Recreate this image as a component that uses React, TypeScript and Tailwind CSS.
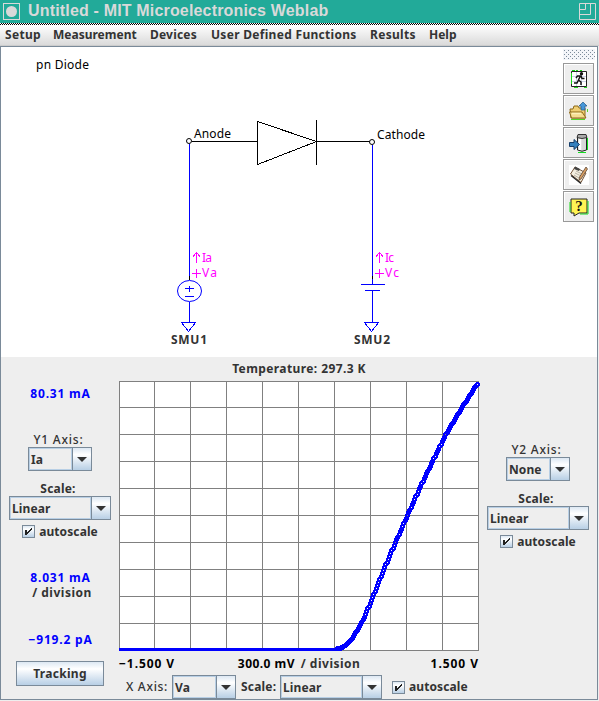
import React from "react";

const GRID_X = [0, 35, 71, 107, 143, 179, 215, 251, 287, 323, 359];
const GRID_Y = [0, 26, 53, 80, 107, 134, 161, 188, 215, 242, 269];

// Measured curve in plot coordinates, interpolated for each sweep step.
const CURVE: [number, number][] = [
  [0, 268], [215, 268], [221, 267], [226, 264], [230, 260], [234, 255], [242, 242],
  [252, 219], [264, 189], [276, 161], [288, 134], [301, 105], [313, 80],
  [326, 54], [344, 24], [351, 13], [358, 2],
];

function curveY(x: number) {
  for (let i = 1; i < CURVE.length; i++) {
    const [x0, y0] = CURVE[i - 1];
    const [x1, y1] = CURVE[i];
    if (x <= x1) return y0 + ((y1 - y0) * (x - x0)) / (x1 - x0);
  }
  return 2;
}

// The flat part of the sweep is drawn as a solid line; markers start at the knee.
const POINTS = Array.from({ length: 299 }, (_, i) => {
  const x = i * 1.2;
  return [Math.round(x) + 0.5, Math.round(curveY(x)) + 0.5];
}).filter(([x]) => x > 218);

function Combo({ value, wide }: { value: string; wide?: boolean }) {
  return (
    <div className={`flex h-6 border border-[#7a8a99] ${wide ? "w-[102px]" : "w-16"}`}>
      <div className="flex-1 border border-[#b8cfe5] pl-px leading-[21px] tracking-[0.1px] text-[#333]">
        {value}
      </div>
      <div className="flex w-[19px] items-center justify-center border-l border-[#7a8a99] bg-linear-to-b from-[#dde8f3] via-white via-30% to-[#b8cfe5]">
        <svg width="10" height="5" viewBox="0 0 10 5">
          <path d="M0 0H10L5 5Z" fill="#333" />
        </svg>
      </div>
    </div>
  );
}

function Check() {
  return (
    <div className="flex h-[13px] items-center gap-[4px]">
      <div className="size-[13px] border border-[#7a8a99] bg-linear-to-b from-[#dde8f3] via-white via-30% to-[#b8cfe5]">
        <svg width="11" height="11" viewBox="0 0 11 11" shapeRendering="crispEdges">
          <path d="M2 4H4V6H5V5H6V4H7V3H8V2H9V4H8V5H7V6H6V7H5V8H4V9H2Z" fill="#222" />
        </svg>
      </div>
      <span className="leading-4 tracking-[0.1px]">autoscale</span>
    </div>
  );
}

function ToolButton({ children }: { children: React.ReactNode }) {
  return (
    <div className="flex size-[31px] items-center justify-center border border-[#999] bg-[#eee] shadow-[inset_1px_1px_0_#fff]">
      <svg width="20" height="20" viewBox="0 0 20 20">
        {children}
      </svg>
    </div>
  );
}

function Toolbar() {
  return (
    <div className="flex w-[34px] flex-col gap-px pt-[2px]">
      <svg className="mb-[2px] shrink-0" width="32" height="11" shapeRendering="crispEdges">
        <defs>
          <pattern id="grip" width="4" height="4" patternUnits="userSpaceOnUse">
            <rect width="4" height="4" fill="#f3f5f9" />
            <path d="M1 1h1v1h-1zM3 3h1v1h-1z" fill="#7a8a99" />
          </pattern>
        </defs>
        <rect width="32" height="11" fill="url(#grip)" />
      </svg>
      <ToolButton>
        <path d="M2.500 2.500H17.500V17.500H2.500Z" fill="#fff" stroke="#222" />
        <path d="M7.500 3V17M12.500 3V17M3 7.500H17M3 12.500H17" stroke="#ccd3e8" />
        <path d="M2.500 4V15M3 1.500h3M7 1.500h2M11 1.500h2M5 18.500h4M15 18.500h3" stroke="#19d819" />
        <circle cx="12.500" cy="4.800" r="1.700" fill="#111" />
        <path d="M11.500 6.500L9.500 11L12 13V16M9.500 11L8 14H5M7 9L8.500 7H12L13 9.500H15.500" fill="none" stroke="#111" strokeWidth="1.500" />
      </ToolButton>
      <ToolButton>
        <path d="M2 17L1 8H4L5 5H9L10 7H16V17Z" fill="#efce73" stroke="#8c6818" />
        <path d="M2.500 17L.5 11H13L17 17Z" fill="#f5dc91" stroke="#8c6818" />
        <path d="M3 12.500H12" stroke="#fff1b8" strokeWidth="1.500" />
        <path d="M14 1L18 5H16V9H12V5H10Z" fill="#4797d8" stroke="#235785" strokeWidth=".7" />
        <path d="M2 18.500H16M18.500 8V11" stroke="#51d928" />
      </ToolButton>
      <ToolButton>
        <path d="M8.500 3V17Q13 19.500 17.500 17V3Z" fill="#d7d8d8" stroke="#222" />
        <path d="M11 6V17" stroke="#fff" strokeWidth="2.500" />
        <path d="M9 1.500H17L18 4.500Q13 6.500 8 4.500Z" fill="#aaa" stroke="#333" />
        <path d="M18.500 5V17M9 19.500H17" stroke="#12dd20" />
        <path d="M.5 9.500H5V6.500L10.500 11.500L5 16.500V13.500H.5Z" fill="#3580bd" stroke="#173e6a" />
      </ToolButton>
      <ToolButton>
        <rect width="20" height="20" fill="#fff" />
        <path d="M6 2L17 8L12 17.500L1.500 9Z" fill="#f4eee0" stroke="#75553a" />
        <path d="M7 6L13 9M6 8L12 11M5 10L10 13" stroke="#aaa294" strokeWidth=".8" />
        <path d="M6 1.500L11 4L10 6L5 4Z" fill="#444" />
        <path d="M17 2L10.500 12L10 15L12 14L18.500 4Z" fill="#d9a064" stroke="#4b3728" strokeWidth=".7" />
        <path d="M2 10.500L12 18.500" stroke="#222" strokeWidth="1.200" />
      </ToolButton>
      <ToolButton>
        <path d="M2 2H18V16H10L5 19V16H2Z" fill="#fff454" stroke="#222" />
        <path d="M19 4V17H11M1 5V15" fill="none" stroke="#19d819" />
        <text x="10" y="14" fill="#111" textAnchor="middle" className="font-['Liberation_Serif',serif] text-[15px] font-bold">?</text>
      </ToolButton>
    </div>
  );
}

function Schematic() {
  return (
    <svg className="block shrink-0" width="562" height="310" viewBox="1 47 562 310" fill="none">
      <g stroke="#000" shapeRendering="crispEdges">
        <path d="M192 141.500H257M317 141.500H370M257.500 121V165M316.500 120V165" />
        <path d="M257.500 121.500L316.500 141.500L257.500 164.500" />
      </g>
      <g stroke="#00f" shapeRendering="crispEdges">
        <path d="M189.500 144V280M372.500 145V284M189.500 302V322M372.500 290V322" />
        <path d="M361 284.500H385M365 290.500H380" />
        <path d="M185 288.500H194M189.500 286V292M185 296.500H194" />
        <path d="M181.500 322.500H195.500L188.500 331.500ZM364.500 322.500H378.500L371.500 331.500Z" />
      </g>
      <ellipse cx="189.500" cy="291" rx="12" ry="10.500" stroke="#00f" />
      <path d="M189.500 276V280M372.500 276V279" stroke="#000" />
      <circle cx="189" cy="141" r="2.500" stroke="#000" fill="#fff" />
      <circle cx="372" cy="142" r="2.500" stroke="#000" fill="#fff" />
      <g stroke="#f0f" shapeRendering="crispEdges">
        <path d="M196.500 253V263M193 256.500L196.500 252.500L200 256.500M192 273.500H201M196.500 269V278" />
        <path d="M379.500 253V263M376 256.500L379.500 252.500L383 256.500M375 273.500H384M379.500 269V278" />
      </g>
      <g className="font-['Noto_Sans',sans-serif] text-[12px] font-normal" fill="#000">
        <text x="36" y="69" textLength="53">pn Diode</text>
        <text x="194" y="138" textLength="37">Anode</text>
        <text x="377" y="139" textLength="48">Cathode</text>
        <g fill="#f0f">
          <text x="202" y="262" textLength="10">Ia</text>
          <text x="202" y="277" textLength="15">Va</text>
          <text x="385" y="262" textLength="9">Ic</text>
          <text x="385" y="277" textLength="14">Vc</text>
        </g>
        <g fill="#333" className="font-bold">
          <text x="171" y="344" textLength="36">SMU1</text>
          <text x="354" y="344" textLength="36">SMU2</text>
        </g>
      </g>
    </svg>
  );
}

function Plot() {
  return (
    <svg className="block overflow-visible" width="360" height="270" shapeRendering="crispEdges">
      <rect width="360" height="270" fill="#fff" />
      {GRID_X.map((x) => <path key={x} d={`M${x + 0.5} 0V270`} stroke="#808080" />)}
      {GRID_Y.map((y) => <path key={y} d={`M0 ${y + 0.5}H360`} stroke="#808080" />)}
      <path d="M0 268.500H223" stroke="#00f" strokeWidth="3" />
      {POINTS.map(([x, y], i) => (
        <circle key={i} cx={x} cy={y} r="1.700" fill="none" stroke="#00f" strokeWidth="1.600" />
      ))}
    </svg>
  );
}

export default function App() {
  return (
    <div className="h-[701px] w-[599px] overflow-hidden bg-[#eee] font-['Noto_Sans',sans-serif] text-[12px] font-bold whitespace-nowrap text-[#333]">
      <header className="flex h-[23px] items-center bg-[#22aa99] pr-[3px] pl-[3px] text-[#d9d9d9]">
        <div className="flex size-[17px] items-center justify-center border border-[#d9d9d9]">
          <div className="size-[11px] rounded-full bg-[#d9d9d9]" />
        </div>
        <h1 className="ml-[8px] flex-1 pb-[2px] font-['Liberation_Sans',sans-serif] text-[16px] leading-[20px] font-bold tracking-[0.17px]">
          Untitled - MIT Microelectronics Weblab
        </h1>
        <svg width="17" height="17" fill="none" stroke="#d9d9d9">
          <path d="M.5.5H16.500V16.500H.5ZM.5 11.500H11.500V.5M.5 6.500H6.500V.5" />
        </svg>
      </header>
      <svg className="block" width="599" height="2" shapeRendering="crispEdges">
        <defs>
          <pattern id="stipple" width="2" height="2" patternUnits="userSpaceOnUse">
            <rect width="2" height="2" fill="#fff" />
            <path d="M1 0h1v1h-1zM0 1h1v1h-1z" fill="#000" />
          </pattern>
        </defs>
        <rect width="599" height="2" fill="url(#stipple)" />
      </svg>
      <nav className="flex h-[21px] border-b border-[#ccc] bg-linear-to-b from-white to-[#dadada] pt-[2px] pl-[5px] leading-4">
        <span className="w-12 tracking-[0.3px]">Setup</span>
        <span className="w-[97px]">Measurement</span>
        <span className="w-[61px] tracking-[0.2px]">Devices</span>
        <span className="w-[159px] tracking-[0.3px]">User Defined Functions</span>
        <span className="w-[59px] tracking-[0.3px]">Results</span>
        <span>Help</span>
      </nav>
      <main className="h-[654px] w-[598px] border border-[#7a8a99]">
        <section className="flex h-[310px] bg-white">
          <Schematic />
          <Toolbar />
        </section>
        <section className="flex">
          <div className="flex w-[118px] flex-col items-center">
            <div className="mt-[29px] ml-px leading-4 tracking-[0.8px] text-[#0000ff]">80.31 mA</div>
            <div className="mt-[30px] mr-[3px] h-[15px] leading-4 font-medium tracking-[0.8px]">Y1 Axis:</div>
            <Combo value="Ia" />
            <div className="mt-[10px] mr-[4px] h-[15px] leading-4 tracking-[0.2px]">Scale:</div>
            <Combo value="Linear" wide />
            <div className="mt-[5px]"><Check /></div>
            <div className="mt-[32px] ml-px leading-[15px] tracking-[0.8px] text-[#0000ff]">8.031 mA</div>
            <div className="ml-[4px] leading-[15px] tracking-[0.5px]">/ division</div>
            <div className="mt-[32px] ml-px leading-[15px] tracking-[0.8px] text-[#0000ff]">−919.2 pA</div>
            <div className="mt-[14px] h-[25px] w-[88px] border border-[#7a8a99] bg-linear-to-b from-[#dde8f3] via-white via-30% to-[#b8cfe5] text-center leading-6 tracking-[0.3px]">Tracking</div>
          </div>
          <div className="w-[360px]">
            <div className="h-6 pt-[4px] text-center leading-4 tracking-[0.4px]">Temperature: 297.3 K</div>
            <Plot />
            <div className="flex h-6 pt-[5px] leading-4 text-black">
              <span className="w-[119px] tracking-[0.9px]">−1.500 V</span>
              <span className="w-[63px] tracking-[0.45px]">300.0 mV</span>
              <span className="w-[130px] tracking-[0.5px] text-[#333]">/ division</span>
              <span className="tracking-[0.95px]">1.500 V</span>
            </div>
            <div className="flex items-center pl-[7px]">
              <span className="w-[46px] font-medium tracking-[0.7px]">X Axis:</span>
              <Combo value="Va" />
              <span className="ml-[5px] w-[39px] tracking-[0.2px]">Scale:</span>
              <Combo value="Linear" wide />
              <div className="ml-[10px]"><Check /></div>
            </div>
          </div>
          <div className="flex w-[118px] flex-col items-center pt-[85px]">
            <div className="mr-[3px] h-[15px] leading-4 font-medium tracking-[0.8px]">Y2 Axis:</div>
            <Combo value="None" />
            <div className="mt-[10px] mr-[4px] h-[15px] leading-4 tracking-[0.2px]">Scale:</div>
            <Combo value="Linear" wide />
            <div className="mt-[5px]"><Check /></div>
          </div>
        </section>
      </main>
    </div>
  );
}
